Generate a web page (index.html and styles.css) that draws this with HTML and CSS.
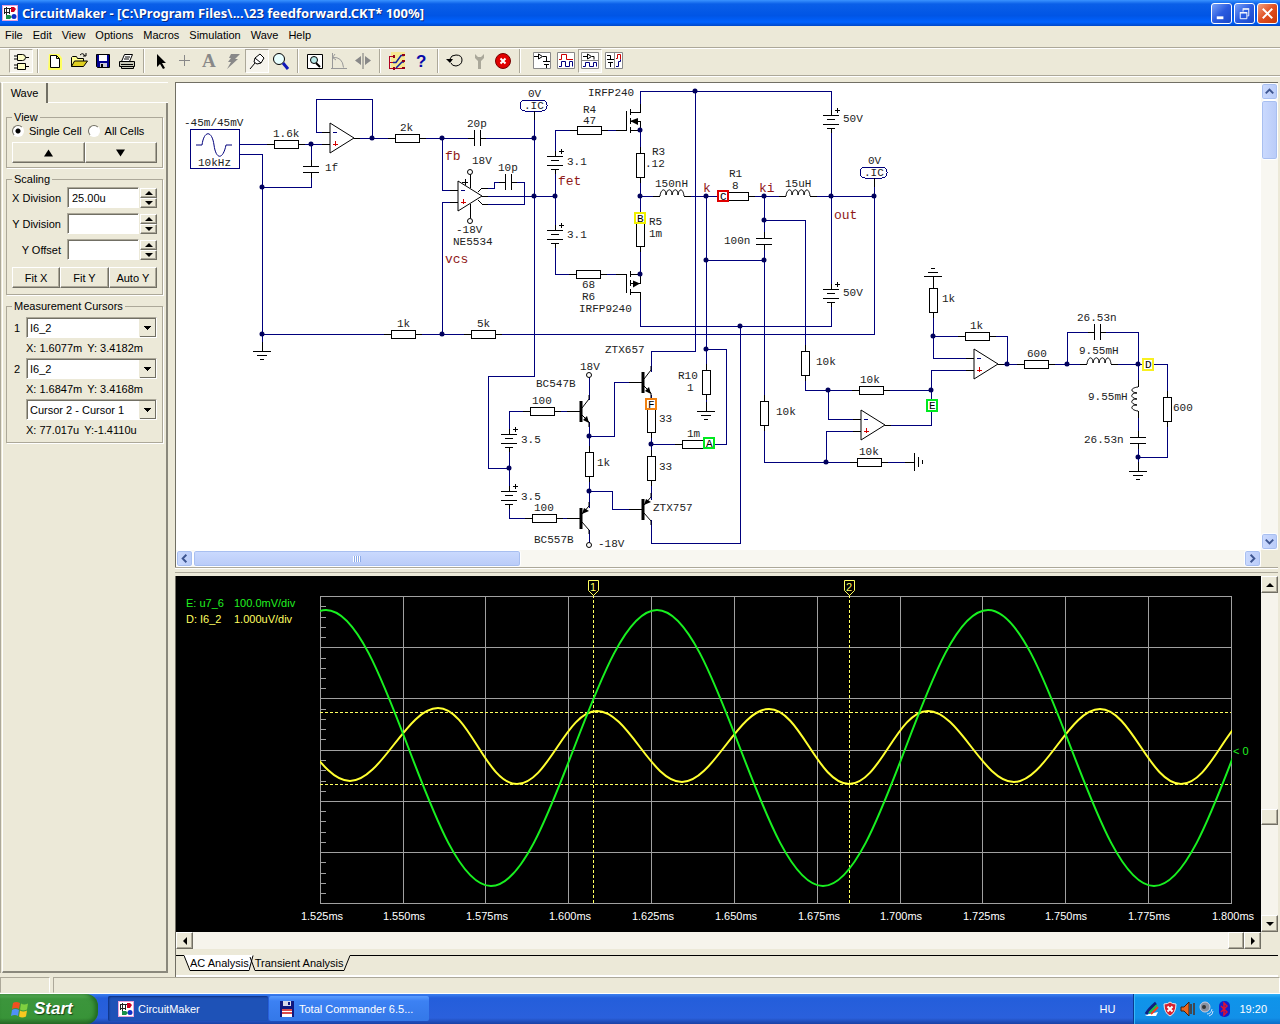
FILE: index.html
```html
<!DOCTYPE html>
<html lang="en">
    <head>
        <meta charset="UTF-8" />
        <meta name="viewport" content="width=device-width, initial-scale=1.0" />
        <title>CircuitMaker</title>
        <link rel="stylesheet" href="styles.css" />
    </head>
    <body>
        <svg class="defs" width="0" height="0" aria-hidden="true">
            <defs>
                <symbol id="app-icon" viewBox="0 0 16 16">
                    <rect width="16" height="16" fill="#fff" />
                    <rect x=".5" y=".5" width="15" height="15" fill="none" stroke="#e6a0d8" />
                    <path d="M2 3.500h7M4.500 2v12M2 7.500h5M7.500 3v6M2.500 3v6" stroke="#222" fill="none" />
                    <path d="M9 2h3l2 2-2 3H9z" fill="#d00020" />
                    <circle cx="12" cy="11.500" r="2.500" fill="#1030c8" />
                    <path d="M4 10h4l2 2-2 2H4z" fill="#189048" />
                </symbol>
                <g id="res"><path class="part" d="M-19 0H19" /><rect class="part body" x="-12" y="-4" width="24" height="8" /></g>
                <g id="resv"><path class="part" d="M0-18V18" /><rect class="part body" x="-4" y="-12" width="8" height="24" /></g>
                <g id="cap"><path class="part" d="M-9 0H9" /><path class="gap" d="M-3 0H3" /><path class="part" d="M-3-8V8M3-8V8" /></g>
                <g id="capv"><path class="part" d="M0-9V9" /><path class="gap" d="M0-3V3" /><path class="part" d="M-8-3H8M-8 3H8" /></g>
                <g id="bat">
                    <path class="part" d="M0-5V0M0 13V18" /><path class="gap" d="M0 0V13" />
                    <path class="part" d="M-8 0H8M-4 4H4M-8 9H8M-4 13H4M4-5H9M6-7V-2" />
                </g>
                <g id="gnd"><path class="part" d="M0-9V0M-9 0H9M-5 4H5M-2 8H2" /></g>
                <g id="coil"><path class="gap" d="M-12 0H12" /><path class="part" d="M-19 0H-12M12 0H19" /><path class="curve" d="M-12 0C-11-8-6-8-6-1C-5-8 0-8 0-1C1-8 6-8 6-1C7-8 11-8 12 0" /></g>
                <g id="amp">
                    <path class="curve body" d="M0-15V15L24 0Z" /><path class="part" d="M-8-6H0M-8 6H0M24 0H30" />
                    <path class="wire" d="M3-6H7" /><path class="plus" d="M3 6H8M5 3V8" />
                </g>
                <g id="npn">
                    <path class="part" d="M-14 0H0" /><path class="bar" d="M0-10V11" />
                    <path class="curve" d="M1-3L8-12V-16M1 4L8 11V16" /><path d="M8 12L2 9L6 5Z" />
                </g>
                <g id="pnp">
                    <path class="part" d="M-14 0H0" /><path class="bar" d="M0-10V11" />
                    <path class="curve" d="M1-4L8-12V-16M1 4L8 12V16" /><path d="M1-4L3-10L8-7Z" />
                </g>
                <g id="ic"><rect class="wire body" x="-14" y="-11" width="27" height="11" rx="5" /><path class="part" d="M0 0V9" /></g>
            </defs>
        </svg>

        <header class="titlebar">
            <svg class="title-icon"><use href="#app-icon" /></svg>
            <h1>CircuitMaker - [C:\Program Files\...\23 feedforward.CKT* 100%]</h1>
            <div class="window-buttons">
                <button aria-label="Minimize"><svg viewBox="0 0 20 20"><path d="M5 14.500h7" stroke-width="3" /></svg></button>
                <button aria-label="Restore"><svg viewBox="0 0 20 20"><path d="M5.500 9.500h7v6h-7zM5 9h8M8.500 8V5.500h6v7H13M8 5h7" /></svg></button>
                <button class="close" aria-label="Close"><svg viewBox="0 0 20 20"><path d="M5 5l10 10M15 5L5 15" stroke-width="2" /></svg></button>
            </div>
        </header>

        <nav class="menubar">
            <button>File</button>
            <button>Edit</button>
            <button>View</button>
            <button>Options</button>
            <button>Macros</button>
            <button>Simulation</button>
            <button>Wave</button>
            <button>Help</button>
        </nav>

        <div class="toolbar" role="toolbar">
            <button class="pressed" aria-label="Parts">
                <svg viewBox="0 0 20 20"><path d="M6.500 3.500h5q3 0 3 3t-3 3h-5zM6.500 12.500h8v6h-8zM3 5h3M3 8h3M15 6.500h3M3 14h3M3 17h3M15 15.500h3" fill="#ffffc8" stroke="#000" /></svg>
            </button>
            <i class="sep"></i>
            <button aria-label="New">
                <svg viewBox="0 0 20 20"><path d="M4 3h10l3 4v12H3z" fill="#ffff60" /><path d="M5.500 4.500h6l3 3v9h-9zM11.500 4.500v3h3" fill="#fff" stroke="#000" /></svg>
            </button>
            <button aria-label="Open">
                <svg viewBox="0 0 20 20"><path d="M2.500 15.500v-9l1-1h4l1 2h6v3" fill="#ffff90" stroke="#000" /><path d="M2.500 15.500l3-5.500h13l-4 5.500z" fill="#e0d020" stroke="#000" /><path d="M11 4q3-3 5 1M14 5h3V2" fill="none" stroke="#000" /></svg>
            </button>
            <button aria-label="Save">
                <svg viewBox="0 0 20 20"><path d="M3.500 3.500h13v13h-12l-1-1z" fill="#000090" stroke="#000" /><path d="M6 4h8v6H6z" fill="#fff" /><path d="M7 12h7v4H7z" fill="#c8c8d8" /><path d="M8 13h2v3H8z" fill="#000" /></svg>
            </button>
            <button aria-label="Print">
                <svg viewBox="0 0 20 20"><path d="M4.500 10.500l3-7h8l-3 7" fill="#fff" stroke="#000" /><path d="M8 6h5M7 8h5" stroke="#000" /><path d="M2.500 10.500h15v5h-15zM4.500 15.500h12v2h-12z" fill="#c8c8b8" stroke="#000" /><path d="M4 13.500h12" stroke="#000" /></svg>
            </button>
            <i class="sep"></i>
            <button aria-label="Select">
                <svg viewBox="0 0 20 20"><path d="M6 3v13l3-3 3 5 2-1-3-5h4z" /></svg>
            </button>
            <button aria-label="Wire">
                <svg viewBox="0 0 20 20"><path d="M4 9.500h11M9.500 4v11" stroke="#888" /></svg>
            </button>
            <button aria-label="Text">
                <svg viewBox="0 0 20 20"><text x="3" y="16" class="letter-a">A</text></svg>
            </button>
            <button aria-label="Delete">
                <svg viewBox="0 0 20 20"><path d="M8 3h9l-5 5h3L4 18l4-7H5l3-4H6z" fill="#888" /></svg>
            </button>
            <button class="pressed" aria-label="Probe">
                <svg viewBox="0 0 20 20"><path d="M3 18l5-6M8 7l5-4 4 4-3 5-4 1-3-2zM8 7l6 5" fill="#fff" stroke="#000" /></svg>
            </button>
            <button aria-label="Zoom">
                <svg viewBox="0 0 20 20"><circle cx="8" cy="8" r="5.500" fill="#e8ffff" stroke="#000" /><path d="M12 12l5 6" stroke="#1018b8" stroke-width="3" /></svg>
            </button>
            <i class="sep"></i>
            <button aria-label="Fit">
                <svg viewBox="0 0 20 20"><path d="M2.500 3.500h15v14h-15z" fill="#fff" stroke="#000" /><circle cx="9" cy="9" r="3.500" fill="#b8e8e8" stroke="#000" /><path d="M11 12l4 4" stroke="#000" stroke-width="2" /></svg>
            </button>
            <button aria-label="Rotate">
                <svg viewBox="0 0 20 20"><path d="M3.500 2v16M2 17.500h16M3.500 6.500q10-1 11 10M6 3L3.500 6.500 7 9" fill="none" stroke="#999" /></svg>
            </button>
            <button aria-label="Mirror">
                <svg viewBox="0 0 20 20"><path d="M10 2v16" stroke="#777" /><path d="M8 5v9L2 9.500zM12 5v9l6-4.500z" fill="#888" /></svg>
            </button>
            <i class="sep"></i>
            <button aria-label="Check">
                <svg viewBox="0 0 20 20"><path d="M4 1h14v16H4z" fill="#ffe860" opacity=".6" /><path d="M2.500 5v12M2 5.500h5M2 11.500h5M2 17.500h14" stroke="#b00020" fill="none" /><path d="M6 11.500h3l5-7h3M9 17l6-6h2" stroke="#1020a0" stroke-width="1.500" fill="none" /><path d="M15 3h3v2h-3zM15 9h3v2h-3zM15 16h3v2h-3zM6 4h2v3H6zM6 16h2v3H6z" fill="#900018" /></svg>
            </button>
            <button aria-label="Help">
                <svg viewBox="0 0 20 20"><text x="5" y="16" class="help-mark">?</text></svg>
            </button>
            <i class="sep"></i>
            <button aria-label="Reset">
                <svg viewBox="0 0 20 20"><path d="M5 8q1-4 6-4 6 0 6 5t-6 6q-4 0-5-3" fill="none" stroke="#000" /><path d="M1 8h7l-3 4z" /></svg>
            </button>
            <button aria-label="Step">
                <svg viewBox="0 0 20 20"><path d="M6 3v4l3 3v8h3v-8l3-3V3l-3 3H9z" fill="#aaa89a" /></svg>
            </button>
            <button aria-label="Stop">
                <svg viewBox="0 0 20 20"><circle cx="10" cy="10" r="7.500" fill="#e00000" stroke="#700" /><path d="M7.500 7.500l5 5M12.500 7.500l-5 5" stroke="#fff" stroke-width="2" /></svg>
            </button>
            <i class="sep wide"></i>
            <button aria-label="Schematic view">
                <svg viewBox="0 0 20 20"><path d="M1.500 1.500h17v16h-17z" fill="#fff" stroke="#888" /><path d="M2 5.500h4M6.500 3v5l4-2.500zM11 5.500h3.500V10M11 10.500h7M12 13.500h5M14.500 14v3" fill="none" stroke="#000" /></svg>
            </button>
            <button aria-label="Wave view">
                <svg viewBox="0 0 20 20"><path d="M1.500 1.500h17v16h-17z" fill="#fff" stroke="#888" /><path d="M3 8.500h2.500v-5h5v5H17" fill="none" stroke="#c00" /><path d="M3 15.500h2.500v-5h4v5h4v-5h3v5" fill="none" stroke="#000080" /></svg>
            </button>
            <button class="pressed" aria-label="Split horizontally">
                <svg viewBox="0 0 20 20"><path d="M1.500 1.500h17v16h-17zM2 9.500h16" fill="#fff" stroke="#888" /><path d="M3 5.500h4M7.500 3v5l4-2.500zM12 5.500h2v3" fill="none" stroke="#000" /><path d="M3 15.500h2.500v-4h4v4h4v-4h3v4" fill="none" stroke="#000080" /></svg>
            </button>
            <button aria-label="Split vertically">
                <svg viewBox="0 0 20 20"><path d="M1.500 1.500h17v16h-17zM10.500 2v16" fill="#fff" stroke="#888" /><path d="M3 4.500h3.500V8M3 8.500h7M4 11.500h5M6.500 12v4" fill="none" stroke="#000" /><path d="M12 7.500h1.500v-4h3v5" fill="none" stroke="#c00" /><path d="M12 15.500h2.500v-5h2v-2" fill="none" stroke="#000080" /></svg>
            </button>
        </div>

        <main class="workspace">
            <aside class="sidebar">
                <div class="tab-row"><button class="side-tab">Wave</button></div>
                <form class="side-panel">
                    <fieldset>
                        <legend>View</legend>
                        <div class="radios">
                            <label><input type="radio" name="cells" checked />Single Cell</label>
                            <label><input type="radio" name="cells" />All Cells</label>
                        </div>
                        <div class="button-row">
                            <button type="button" aria-label="Previous"><svg viewBox="0 0 10 8"><path d="M5 0l5 8H0z" /></svg></button>
                            <button type="button" aria-label="Next"><svg viewBox="0 0 10 8"><path d="M5 8l5-8H0z" /></svg></button>
                        </div>
                    </fieldset>
                    <fieldset class="scaling">
                        <legend>Scaling</legend>
                        <div class="field">
                            <label for="xdiv">X Division</label>
                            <input id="xdiv" type="text" value="25.00u" />
                            <span class="spin"><button type="button" class="up" aria-label="More"></button><button type="button" class="down" aria-label="Less"></button></span>
                        </div>
                        <div class="field">
                            <label for="ydiv">Y Division</label>
                            <input id="ydiv" type="text" />
                            <span class="spin"><button type="button" class="up" aria-label="More"></button><button type="button" class="down" aria-label="Less"></button></span>
                        </div>
                        <div class="field">
                            <label for="yoff">Y Offset</label>
                            <input id="yoff" type="text" />
                            <span class="spin"><button type="button" class="up" aria-label="More"></button><button type="button" class="down" aria-label="Less"></button></span>
                        </div>
                        <div class="button-row">
                            <button type="button">Fit X</button>
                            <button type="button">Fit Y</button>
                            <button type="button">Auto Y</button>
                        </div>
                    </fieldset>
                    <fieldset class="cursors">
                        <legend>Measurement Cursors</legend>
                        <label for="cur1">1</label>
                        <select id="cur1"><option>I6_2</option></select>
                        <p><span>X: 1.6077m</span><span>Y: 3.4182m</span></p>
                        <label for="cur2">2</label>
                        <select id="cur2"><option>I6_2</option></select>
                        <p><span>X: 1.6847m</span><span>Y: 3.4168m</span></p>
                        <select id="diff" aria-label="Difference"><option>Cursor 2 - Cursor 1</option></select>
                        <p><span>X: 77.017u</span><span>Y:-1.4110u</span></p>
                    </fieldset>
                </form>
            </aside>

            <section class="documents">
                <div class="schematic">
                    <svg class="canvas" role="img" aria-label="Schematic">
                        <g transform="translate(-176 -83)">
                            <!-- wires -->
                            <path class="wire" d="M239 144H330M239 154H262V351M311 144V187H262M330 132H316V99H372V138M354 138H534M442 138V190H458
                                M458 202H442V334M262 334H874V178M534 111V376H488V468H509M482 196H555M482 188H494V182H524V204H482
                                M626 130H555V274H626M640 112V91H831V326H640V292M640 130V274M640 196H874M695 91V351H651V372
                                M706 196V411M764 196V462H914M764 220H805V390H931M764 260H706M740 326V543H651V520
                                M706 349H726V444H651M651 395V500M509 411V518H581M509 411H581M589 375V400M589 422V508M589 530V543
                                M589 436H614V382H642M589 491H612V509H642
                                M828 390V419H861M826 462V431H861M885 425H931V370H974M933 276V358H974M933 336H1007V364M998 364H1167V457H1138M1067 364V332H1138V471" />
                            <!-- signal generator -->
                            <rect class="wire body" x="190" y="129" width="49" height="39" />
                            <path class="sine" d="M196 145H202C204 130 212 130 214 145C216 160 223 160 226 145H232" />
                            <!-- resistors -->
                            <use href="#res" x="286" y="144" /><use href="#res" x="407" y="138" /><use href="#res" x="403" y="334" />
                            <use href="#res" x="483" y="334" /><use href="#res" x="589" y="130" /><use href="#res" x="588" y="274" />
                            <use href="#res" x="736" y="196" /><use href="#res" x="542" y="411" /><use href="#res" x="544" y="518" />
                            <use href="#res" x="694" y="444" /><use href="#res" x="871" y="390" /><use href="#res" x="869" y="462" />
                            <use href="#res" x="977" y="336" /><use href="#res" x="1036" y="364" />
                            <use href="#resv" x="640" y="165" /><use href="#resv" x="640" y="234" /><use href="#resv" x="706" y="382" />
                            <use href="#resv" x="651" y="420" /><use href="#resv" x="651" y="468" /><use href="#resv" x="589" y="464" />
                            <use href="#resv" x="764" y="413" /><use href="#resv" x="805" y="363" /><use href="#resv" x="933" y="300" />
                            <use href="#resv" x="1167" y="409" />
                            <!-- capacitors and coils -->
                            <use href="#cap" x="477" y="138" /><use href="#cap" x="508" y="182" /><use href="#cap" x="1097" y="332" />
                            <use href="#capv" x="311" y="169" /><use href="#capv" x="764" y="241" /><use href="#capv" x="1138" y="440" />
                            <use href="#coil" x="672" y="196" /><use href="#coil" x="798" y="196" /><use href="#coil" x="1099" y="364" />
                            <use href="#coil" transform="translate(1138 399) rotate(-90)" />
                            <!-- sources and grounds -->
                            <use href="#bat" x="555" y="156" /><use href="#bat" x="555" y="230" /><use href="#bat" x="831" y="115" />
                            <use href="#bat" x="831" y="289" /><use href="#bat" x="509" y="434" /><use href="#bat" x="509" y="491" />
                            <use href="#gnd" x="262" y="351" /><use href="#gnd" x="706" y="411" /><use href="#gnd" x="1138" y="471" />
                            <use href="#gnd" transform="translate(933 276) rotate(180)" /><use href="#gnd" transform="translate(914 462) rotate(-90)" />
                            <use href="#ic" x="534" y="111" /><use href="#ic" x="874" y="178" />
                            <!-- amplifiers -->
                            <use href="#amp" x="330" y="138" /><use href="#amp" x="458" y="196" />
                            <use href="#amp" x="861" y="425" /><use href="#amp" x="974" y="364" />
                            <path class="part" d="M470 174V188M470 204V218M462 182H468M465 179V185M482 188H488M482 204H488" />
                            <path class="curve" d="M478 192L482 188M478 200L482 204" />
                            <g class="curve body"><circle cx="470" cy="172" r="2.500" /><circle cx="470" cy="221" r="2.500" /><circle cx="589" cy="375" r="2.500" /><circle cx="589" cy="545" r="2.500" /></g>
                            <!-- transistors -->
                            <use href="#npn" x="581" y="411" /><use href="#npn" x="643" y="382" />
                            <use href="#pnp" x="581" y="518" /><use href="#pnp" x="643" y="509" />
                            <path class="part" d="M616 130H626V111M630 109V115M630 118V124M630 127V133M640 104V112H630M640 130V121H630M630 130H640" />
                            <path d="M630 121l8-3v7z" />
                            <path class="part" d="M616 274H626V293M630 271V277M630 280V286M630 289V295M630 274H640V283H630M630 292H640V300" />
                            <path d="M640 283.500l-7-3v7z" />
                            <!-- junctions -->
                            <path class="node" d="M262 187h0M262 334h0M311 144h0M372 138h0M442 138h0M442 334h0M534 138h0M534 196h0M555 196h0M640 130h0M640 196h0M640 274h0
                                M695 91h0M706 196h0M764 196h0M831 196h0M874 196h0M764 220h0M764 260h0M706 260h0M740 326h0M706 349h0M651 444h0M509 468h0M589 436h0M589 491h0
                                M828 390h0M931 390h0M826 462h0M933 336h0M1007 364h0M1067 364h0M1138 364h0M1138 457h0" />
                            <!-- probes -->
                            <g class="probe">
                                <rect x="635" y="213" width="10" height="10" stroke="#f0f000" /><text x="637" y="222">B</text>
                                <rect x="718" y="191" width="10" height="10" stroke="#e00000" /><text x="720" y="200">C</text>
                                <rect x="646" y="399" width="10" height="10" stroke="#f08010" /><text x="648" y="408">F</text>
                                <rect x="704" y="438" width="10" height="10" stroke="#00e820" /><text x="706" y="447">A</text>
                                <rect x="927" y="400" width="10" height="11" stroke="#00e820" /><text x="929" y="409">E</text>
                                <rect x="1143" y="359" width="10" height="11" stroke="#f8f020" /><text x="1145" y="368">D</text>
                            </g>
                            <!-- values -->
                            <g class="values">
                                <text x="184" y="126">-45m/45mV</text><text x="198" y="166">10kHz</text><text x="273" y="137">1.6k</text>
                                <text x="325" y="171">1f</text><text x="400" y="131">2k</text><text x="467" y="127">20p</text>
                                <text x="472" y="164">18V</text><text x="498" y="171">10p</text><text x="456" y="233">-18V</text>
                                <text x="453" y="245">NE5534</text><text x="528" y="97">0V</text><text x="524" y="109">.IC</text>
                                <text x="397" y="327">1k</text><text x="477" y="327">5k</text><text x="588" y="96">IRFP240</text>
                                <text x="583" y="113">R4</text><text x="583" y="124">47</text><text x="567" y="165">3.1</text>
                                <text x="567" y="238">3.1</text><text x="652" y="155">R3</text><text x="645" y="167">.12</text>
                                <text x="655" y="187">150nH</text><text x="649" y="225">R5</text><text x="649" y="237">1m</text>
                                <text x="582" y="288">68</text><text x="582" y="300">R6</text><text x="579" y="312">IRFP9240</text>
                                <text x="729" y="177">R1</text><text x="732" y="189">8</text><text x="785" y="187">15uH</text>
                                <text x="724" y="244">100n</text><text x="868" y="164">0V</text><text x="864" y="176">.IC</text>
                                <text x="843" y="122">50V</text><text x="843" y="296">50V</text><text x="605" y="353">ZTX657</text>
                                <text x="580" y="370">18V</text><text x="536" y="387">BC547B</text><text x="532" y="404">100</text>
                                <text x="521" y="443">3.5</text><text x="521" y="500">3.5</text><text x="534" y="511">100</text>
                                <text x="534" y="543">BC557B</text><text x="598" y="547">-18V</text><text x="597" y="466">1k</text>
                                <text x="659" y="422">33</text><text x="659" y="470">33</text><text x="687" y="437">1m</text>
                                <text x="678" y="379">R10</text><text x="687" y="391">1</text><text x="653" y="511">ZTX757</text>
                                <text x="816" y="365">10k</text><text x="860" y="383">10k</text><text x="776" y="415">10k</text>
                                <text x="859" y="455">10k</text><text x="942" y="302">1k</text><text x="970" y="329">1k</text>
                                <text x="1027" y="357">600</text><text x="1077" y="321">26.53n</text><text x="1079" y="354">9.55mH</text>
                                <text x="1088" y="400">9.55mH</text><text x="1084" y="443">26.53n</text><text x="1173" y="411">600</text>
                            </g>
                            <g class="nets">
                                <text x="445" y="160">fb</text><text x="445" y="263">vcs</text><text x="558" y="185">fet</text>
                                <text x="703" y="192">k</text><text x="759" y="192">ki</text><text x="834" y="219">out</text>
                            </g>
                        </g>
                    </svg>
                </div>
                <div class="scroll xp vertical">
                    <button aria-label="Scroll up"><svg viewBox="0 0 16 16"><path d="M4 10l4-4 4 4" /></svg></button>
                    <span class="thumb"></span>
                    <button class="end" aria-label="Scroll down"><svg viewBox="0 0 16 16"><path d="M4 6l4 4 4-4" /></svg></button>
                </div>
                <div class="scroll xp horizontal">
                    <button aria-label="Scroll left"><svg viewBox="0 0 16 16"><path d="M10 4L6 8l4 4" /></svg></button>
                    <span class="thumb"></span>
                    <button class="end" aria-label="Scroll right"><svg viewBox="0 0 16 16"><path d="M6 4l4 4-4 4" /></svg></button>
                </div>
                <div class="splitter"></div>

                <div class="plot">
                    <svg class="canvas" role="img" aria-label="Waveforms">
                        <defs><clipPath id="plot-area"><rect x="320" y="596" width="912" height="308" /></clipPath></defs>
                        <g transform="translate(-176 -576)">
                            <path class="grid" d="M320 596H1231V903H320ZM403 596V903M485 596V903M568 596V903M651 596V903M734 596V903M817 596V903M900 596V903M982 596V903M1065 596V903M1148 596V903
                                M320 647H1231M320 698H1231M320 750H1231M320 801H1231M320 852H1231" />
                            <path class="grid" d="M320 606h6M320 617h6M320 627h6M320 637h6M320 658h6M320 668h6M320 678h6M320 688h6M320 709h6M320 719h6M320 729h6M320 739h6
                                M320 760h6M320 770h6M320 781h6M320 791h6M320 811h6M320 821h6M320 832h6M320 842h6M320 862h6M320 873h6M320 883h6M320 893h6" />
                            <path class="cursor-line" d="M593 595V903M849 595V903M320 712H1231M320 784H1231" />
                            <g clip-path="url(#plot-area)">
                                <path class="trace yellow" d="M265 711C296 711 319 781 350 781S407 708 438 708S486 784 517 784S566 711 597 711S651 782 682 782S738 709 769 709S818 784 849 784S897 711 928 711S983 782 1014 782S1069 709 1100 709S1150 784 1181 784S1229 711 1260 711" />
                                <path class="trace green" d="M160 886C220 886 266 610 326 610S431 886 491 886S597 610 657 610S763 886 823 886S928 610 988 610S1094 886 1154 886S1259 610 1319 610" />
                            </g>
                            <g class="flag">
                                <path d="M588.500 580.500h10v10l-5 5-5-5zM844.500 580.500h10v10l-5 5-5-5z" />
                                <text x="590" y="591">1</text><text x="846" y="591">2</text>
                            </g>
                            <g class="plot-text">
                                <g class="green"><text x="186" y="607">E: u7_6</text><text x="234" y="607">100.0mV/div</text><text x="1233" y="755">&lt; 0</text></g>
                                <g class="yellow"><text x="186" y="623">D: I6_2</text><text x="234" y="623">1.000uV/div</text></g>
                                <g class="axis">
                                    <text x="322" y="920">1.525ms</text><text x="404" y="920">1.550ms</text><text x="487" y="920">1.575ms</text>
                                    <text x="570" y="920">1.600ms</text><text x="653" y="920">1.625ms</text><text x="736" y="920">1.650ms</text>
                                    <text x="819" y="920">1.675ms</text><text x="901" y="920">1.700ms</text><text x="984" y="920">1.725ms</text>
                                    <text x="1066" y="920">1.750ms</text><text x="1149" y="920">1.775ms</text><text x="1233" y="920">1.800ms</text>
                                </g>
                            </g>
                        </g>
                    </svg>
                </div>
                <div class="scroll classic vertical">
                    <button class="up" aria-label="Scroll up"></button>
                    <span class="thumb"></span>
                    <button class="down" aria-label="Scroll down"></button>
                </div>
                <div class="scroll classic horizontal">
                    <button class="left" aria-label="Scroll left"></button>
                    <span class="thumb"></span>
                    <button class="right" aria-label="Scroll right"></button>
                </div>
                <div class="sheet-tabs">
                    <i class="lead"></i>
                    <svg width="6" height="16"><path class="paper" d="M0 0L6 15V0z" /><path d="M0 .5L6 15.500" /></svg>
                    <button class="active">AC Analysis</button>
                    <svg width="6" height="16"><path class="paper" d="M0 0H4L0 15z" /><path d="M0 15.500L4 .5M1 2L6 15.500" /></svg>
                    <button>Transient Analysis</button>
                    <svg width="6" height="16"><path d="M0 15.500L6 .5" /></svg>
                    <i class="rest"></i>
                </div>
            </section>
        </main>

        <div class="statusbar"><span></span><span></span></div>

        <footer class="taskbar">
            <button class="start">
                <svg viewBox="0 0 18 18"><path d="M2 3q3-2 7 0l-1 6q-3-2-7 0z" fill="#f05020" /><path d="M10 3.500q3 2 7 0l-1 6q-4 2-7 0z" fill="#80d040" /><path d="M1 10q3-2 7 0l-1 6q-3-2-7 0z" fill="#5090f8" /><path d="M9 10.500q3 2 7 0l-1 6q-4 2-7 0z" fill="#f8c820" /></svg>
                Start
            </button>
            <button class="task current"><svg viewBox="0 0 16 16"><use href="#app-icon" width="16" height="16" /></svg>CircuitMaker</button>
            <button class="task">
                <svg viewBox="0 0 16 16"><path d="M1 0h14v16H1z" fill="#101880" /><path d="M4 0h8v5H4z" fill="#d8d8e8" /><path d="M9 1h2v3H9z" fill="#101880" /><path d="M3 8h10v8H3z" fill="#fff" /><path d="M3 9h10M3 12h10" stroke="#d01010" stroke-width="1.500" /></svg>
                Total Commander 6.5...
            </button>
            <span class="lang">HU</span>
            <div class="tray">
                <svg viewBox="0 0 16 16"><path d="M1 14l13-3-2 4H3z" fill="#fff" /><path d="M2 13Q5 8 12 2" stroke="#102080" stroke-width="3" fill="none" /><path d="M5 12l8-8" stroke="#20c040" stroke-width="2" /><path d="M7 13l7-7" stroke="#f04020" stroke-width="2" /></svg>
                <svg viewBox="0 0 16 16"><path d="M2 3q4 0 6-2 2 2 6 2 0 9-6 12-6-3-6-12z" fill="#d82030" stroke="#eee" /><path d="M5.500 5.500l5 5M10.500 5.500l-5 5" stroke="#fff" stroke-width="2" /></svg>
                <svg viewBox="0 0 16 16"><path d="M1 6h3l5-5v14l-5-5H1z" fill="#e86820" stroke="#402010" /><path d="M11 3v10M14 2v12" stroke="#503020" stroke-width="1.500" /></svg>
                <svg viewBox="0 0 16 16"><circle cx="7" cy="6" r="5" fill="#8890a0" stroke="#ccd" /><circle cx="6" cy="6" r="2" fill="#333" /><path d="M9 13q4 0 5-5M11 15q4-1 4-5" stroke="#c8e0ff" fill="none" /></svg>
                <svg viewBox="0 0 16 16"><rect x="3" width="11" height="16" rx="5" fill="#1020d0" /><path d="M5 5l6 6-3 3V2l3 3-6 6" fill="none" stroke="#e01030" stroke-width="1.500" /></svg>
                <time>19:20</time>
            </div>
        </footer>
    </body>
</html>
```
FILE: styles.css
```css
* {
    box-sizing: border-box;
}
body {
    margin: 0;
    min-height: 100vh;
    display: flex;
    flex-direction: column;
    background: #ece9d8;
    font: 11px "Liberation Sans", Arial, sans-serif;
    color: #000;
}
button,
input,
select {
    font: inherit;
    color: inherit;
    border-radius: 0;
    margin: 0;
    padding: 0;
}
.defs {
    position: absolute;
}

/* title bar */
.titlebar {
    height: 26px;
    display: flex;
    align-items: center;
    padding: 0 2px;
    background: linear-gradient(#3a93ff 0, #0a5fe8 4px, #0055e5 60%, #0062ff 85%, #0048c8);
}
.title-icon {
    width: 16px;
    height: 16px;
}
.titlebar h1 {
    flex: 1;
    margin: 0 0 0 4px;
    font: bold 13px "Noto Sans", sans-serif;
    color: #fff;
    text-shadow: 1px 1px #0a2a80;
    white-space: nowrap;
}
.window-buttons {
    display: flex;
    gap: 2px;
}
.window-buttons button {
    width: 21px;
    height: 21px;
    border: 1px solid #fff;
    border-radius: 3px;
    background: linear-gradient(135deg, #7aa2f8, #2a5be0 50%, #1a48c8);
}
.window-buttons .close {
    background: linear-gradient(135deg, #f0a080, #e04e20 50%, #c83808);
}
.window-buttons svg {
    display: block;
    stroke: #fff;
    fill: none;
}

/* menu and toolbar */
.menubar {
    height: 22px;
    display: flex;
    gap: 10px;
    padding: 0 5px 3px;
    border-bottom: 1px solid #aca899;
    box-shadow: 0 1px #fff;
}
.menubar button {
    border: 0;
    background: none;
}
.toolbar {
    height: 28px;
    display: flex;
    align-items: center;
    padding: 0 9px 2px;
    border-bottom: 1px solid #aca899;
    box-shadow: 0 1px #fff;
}
.toolbar button {
    width: 24px;
    height: 24px;
    padding: 1px;
    border: 1px solid transparent;
    background: none;
}
.toolbar svg {
    display: block;
    width: 20px;
    height: 20px;
}
.toolbar .pressed {
    background: #f6f4ec;
    border-color: #aca899 #fff #fff #aca899;
}
.sep {
    width: 2px;
    height: 24px;
    margin: 0 4px;
    border-left: 1px solid #aca899;
    border-right: 1px solid #fff;
}
.sep.wide {
    margin-right: 9px;
}
.letter-a {
    font: bold 19px "Liberation Serif", serif;
    fill: #888;
}
.help-mark {
    font: bold 17px "Liberation Sans", sans-serif;
    fill: #0808a8;
}

/* left panel */
.workspace {
    flex: 1;
    display: flex;
    padding-top: 6px;
}
.sidebar {
    width: 168px;
    flex: none;
    display: flex;
    flex-direction: column;
    border-left: 1px solid #aca899;
    border-top: 1px solid #fff;
    padding-left: 1px;
    margin-bottom: 4px;
}
.tab-row {
    display: flex;
    height: 20px;
}
.tab-row::after {
    content: "";
    flex: 1;
    border-bottom: 1px solid #fff;
}
.side-tab {
    width: 46px;
    border: solid #fff;
    border-width: 0 0 0 1px;
    border-right: 2px solid #716f64;
    background: none;
}
.side-panel {
    flex: 1;
    padding: 7px 3px 0;
    border: solid;
    border-width: 0 2px 2px 1px;
    border-color: #fff #8a887c #8a887c #fff;
}
fieldset {
    margin: 0 0 4px;
    padding: 0 5px 4px;
    border: 1px solid #aca899;
    box-shadow: 1px 1px #fff;
    min-width: 0;
}
legend {
    height: 14px;
    line-height: 14px;
    padding: 0 2px;
}
.radios {
    display: flex;
    gap: 6px;
    height: 14px;
    margin-bottom: 4px;
    white-space: nowrap;
}
.radios label {
    display: flex;
    align-items: center;
    gap: 5px;
}
.radios input {
    appearance: none;
    width: 12px;
    height: 12px;
    border: 1px solid;
    border-color: #716f64 #fff #fff #716f64;
    border-radius: 50%;
    background: #fff;
}
.radios input:checked {
    background: radial-gradient(#000 2px, #fff 3px);
}
.button-row {
    display: flex;
}
.button-row button,
.spin button,
.classic button,
.classic .thumb {
    background: #ece9d8;
    border: 1px solid;
    border-color: #fff #716f64 #716f64 #fff;
    box-shadow: inset -1px -1px #aca899;
}
.button-row button {
    flex: 1;
    height: 21px;
}
.button-row svg {
    width: 9px;
    height: 8px;
}
.scaling {
    padding: 1px 5px 6px;
}
.field {
    display: flex;
    align-items: center;
    gap: 1px;
    height: 21px;
    margin-bottom: 5px;
}
.scaling .button-row {
    margin-top: 7px;
}
.field label {
    width: 53px;
    margin-right: 1px;
    padding-right: 4px;
    text-align: right;
    white-space: nowrap;
}
.field input {
    flex: 1;
    min-width: 0;
    height: 21px;
    padding-left: 4px;
}
.field input,
select {
    border: 1px solid;
    border-color: #aca899 #fff #fff #aca899;
    box-shadow: inset 1px 1px #716f64;
    background: #fff;
}
.spin {
    width: 17px;
    display: flex;
    flex-direction: column;
}
.spin button {
    height: 10px;
}
.up,
.down,
.left,
.right {
    display: flex;
    align-items: center;
    justify-content: center;
}
.up::before,
.down::before,
.left::before,
.right::before {
    content: "";
    border: 4px solid transparent;
}
.up::before {
    border-bottom-color: #000;
    border-top: 0;
}
.down::before {
    border-top-color: #000;
    border-bottom: 0;
}
.left::before {
    border-right-color: #000;
    border-left: 0;
}
.right::before {
    border-left-color: #000;
    border-right: 0;
}
.cursors {
    display: grid;
    grid-template-columns: 14px 1fr;
    align-items: center;
    padding: 4px 5px 2px;
}
.cursors label {
    padding-left: 2px;
}
.cursors select,
.cursors p {
    grid-column: 2;
}
.cursors p {
    display: flex;
    gap: 5px;
    margin: 0;
    line-height: 20px;
    white-space: nowrap;
}
select {
    appearance: none;
    width: 100%;
    height: 21px;
    padding-left: 3px;
    background: linear-gradient(#000, #000) right 5px top 8px / 7px 1px no-repeat,
        linear-gradient(#000, #000) right 6px top 9px / 5px 1px no-repeat,
        linear-gradient(#000, #000) right 7px top 10px / 3px 1px no-repeat,
        linear-gradient(#000, #000) right 8px top 11px / 1px 1px no-repeat,
        linear-gradient(#716f64, #716f64) right top / 1px 100% no-repeat,
        linear-gradient(#716f64, #716f64) right bottom / 16px 1px no-repeat,
        linear-gradient(#ece9d8, #ece9d8) right / 17px 100% no-repeat #fff;
}

/* document area */
.documents {
    flex: 1;
    min-width: 0;
    display: grid;
    grid-template-columns: 1fr 17px;
    grid-template-rows: 467fr 17px 9px 356fr 17px 28px;
    margin: 0 2px 0 7px;
    border: solid #716f64;
    border-width: 1px 0 0 1px;
}
.schematic,
.plot {
    position: relative;
    overflow: hidden;
    min-height: 0;
    background: #fff;
}
.plot {
    background: #000;
}
.canvas {
    position: absolute;
    width: 100%;
    height: 100%;
}
.scroll {
    display: flex;
}
.vertical {
    flex-direction: column;
}
.horizontal {
    grid-column: 1;
}
.scroll button {
    width: 17px;
    height: 17px;
    flex: none;
}
.xp {
    background: #f8f7f1;
}
.xp button,
.xp .thumb {
    background: linear-gradient(90deg, #cbdafe, #b9cbf8);
    border: 1px solid #fff;
    border-radius: 3px;
    box-shadow: inset 0 0 0 1px #a8bff0;
}
.xp svg {
    display: block;
    fill: none;
    stroke: #3d5590;
    stroke-width: 2;
}
.end {
    margin-left: auto;
}
.vertical .end {
    margin: auto 0 0;
}
.xp.vertical .thumb {
    height: 60px;
}
.xp.horizontal .thumb {
    width: 328px;
    background: repeating-linear-gradient(90deg, #fff 0 1px, #8caae8 1px 2px) center / 8px 6px no-repeat,
        linear-gradient(#cbdafe, #b9cbf8);
}
.splitter {
    grid-column: 1 / -1;
    margin-left: -1px;
    border-top: 1px solid #aca899;
    background: linear-gradient(#fff 0 1px, #ece9d8 1px 4px, #aca899 4px 5px, #ece9d8 5px);
}
.classic {
    background: #f6f4ec;
}
.classic.vertical .thumb {
    height: 16px;
    margin-top: 216px;
}
.classic.vertical .down {
    margin-top: auto;
}
.classic.horizontal .thumb {
    width: 16px;
    margin-left: auto;
}
.sheet-tabs {
    grid-column: 1 / -1;
    display: flex;
    align-items: flex-start;
    padding-top: 6px;
    border-bottom: 2px solid #fff;
}
.sheet-tabs i {
    border-top: 1px solid #000;
}
.lead {
    width: 8px;
}
.rest {
    flex: 1;
}
.sheet-tabs svg {
    stroke: #000;
    fill: none;
}
.sheet-tabs .paper {
    fill: #fff;
    stroke: none;
}
.sheet-tabs button {
    height: 16px;
    border: 0;
    border-bottom: 1px solid #000;
    background: none;
    white-space: nowrap;
}
.sheet-tabs .active {
    background: #fff;
}

/* schematic drawing */
.wire,
.part,
.plus,
.gap,
.probe rect {
    shape-rendering: crispEdges;
}
.wire {
    fill: none;
    stroke: #00007c;
}
.sine {
    fill: none;
    stroke: #00007c;
}
.part,
.curve {
    fill: none;
    stroke: #000;
}
.gap {
    stroke: #fff;
    stroke-width: 2;
}
.body {
    fill: #fff;
}
.bar {
    stroke: #000;
    stroke-width: 3;
}
.plus {
    fill: none;
    stroke: #d00000;
}
.node {
    stroke: #00005c;
    stroke-width: 5;
    stroke-linecap: round;
}
.values,
.nets,
.probe {
    font: 11px "Liberation Mono", "Courier New", monospace;
}
.values {
    fill: #222;
}
.nets {
    font-size: 13px;
    fill: #901818;
}
.probe rect {
    fill: #fff;
    stroke-width: 2;
}

/* wave drawing */
.grid {
    fill: none;
    stroke: #a0a0a0;
    shape-rendering: crispEdges;
}
.cursor-line {
    stroke: #ffff60;
    stroke-dasharray: 3 2;
    shape-rendering: crispEdges;
}
.trace {
    fill: none;
    stroke-width: 2;
}
.trace.green {
    stroke: #18f020;
}
.trace.yellow {
    stroke: #ffff30;
}
.flag path {
    fill: none;
    stroke: #ffff60;
}
.flag text,
.plot-text .yellow {
    fill: #ffff60;
}
.plot-text .green {
    fill: #20f020;
}
.axis {
    fill: #fff;
    text-anchor: middle;
}

/* status and task bars */
.statusbar {
    height: 17px;
    display: flex;
    gap: 3px;
    border-bottom: 1px solid #fff;
}
.statusbar span {
    width: 50px;
    border: 1px solid;
    border-color: #aca899 #fff #ece9d8 #aca899;
}
.statusbar span + span {
    flex: 1;
}
.taskbar {
    height: 30px;
    display: flex;
    align-items: stretch;
    background: linear-gradient(#3a80f0 0, #245edb 4px, #2a60dc 80%, #1941a5);
    color: #fff;
}
.taskbar button {
    display: flex;
    align-items: center;
    border: 0;
}
.start {
    width: 98px;
    margin-right: 10px;
    gap: 5px;
    padding-left: 11px;
    background: linear-gradient(#60b860 0, #3c953c 5px, #389438 80%, #2a6a2a);
    box-shadow: inset -3px 0 4px #206820;
    text-shadow: 1px 1px 1px #174017;
}
.taskbar .start {
    font: italic bold 17px "Liberation Sans", sans-serif;
    border-radius: 0 12px 12px 0;
}
.start svg {
    width: 18px;
    height: 18px;
}
.task {
    flex: 0 1 160px;
    height: 25px;
    margin: 2px 1px 0 0;
    gap: 4px;
    padding-left: 10px;
    background: linear-gradient(#5a9cff, #3c81f3 5px, #3478e8);
    white-space: nowrap;
    overflow: hidden;
}
.taskbar .task {
    border-radius: 2px;
}
.task.current {
    background: #1e52b7;
    box-shadow: inset 1px 1px 2px #0e3080;
}
.task svg {
    width: 16px;
    height: 16px;
}
.lang {
    margin-left: auto;
    align-self: center;
    padding-right: 18px;
}
.tray {
    display: flex;
    align-items: center;
    gap: 2px;
    padding: 0 13px 0 10px;
    border-left: 1px solid #0a3a90;
    background: linear-gradient(#30b0f8 0, #0f94ea 4px, #1290e8 80%, #0a6cc8);
    box-shadow: inset 1px 0 #38b8f8;
}
.tray svg {
    width: 16px;
    height: 16px;
}
.tray time {
    margin-left: 5px;
}
```
